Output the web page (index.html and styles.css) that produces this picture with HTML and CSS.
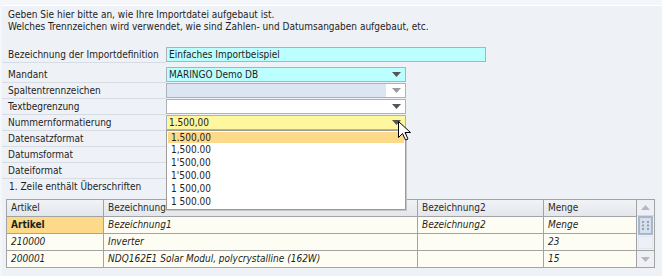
FILE: index.html
```html
<!DOCTYPE html>
<html lang="de">
<head>
<meta charset="utf-8">
<title>Importdefinition</title>
<link rel="stylesheet" href="styles.css">
</head>
<body>
<div class="panel">
  <div class="intro">
    <div>Geben Sie hier bitte an, wie Ihre Importdatei aufgebaut ist.</div>
    <div>Welches Trennzeichen wird verwendet, wie sind Zahlen- und Datumsangaben aufgebaut, etc.</div>
  </div>

  <div class="form">
    <div class="row">
      <div class="label">Bezeichnung der Importdefinition</div>
      <div class="field"><div class="input cyan wide"><span class="val">Einfaches Importbeispiel</span></div></div>
    </div>
    <div class="group">
      <div class="row">
        <div class="label">Mandant</div>
        <div class="field"><div class="input cyan combo"><span class="val">MARINGO Demo DB</span><span class="btn"><svg width="9" height="5" viewBox="0 0 9 5"><polygon points="0,0 9,0 4.5,5" fill="#555"/></svg></span></div></div>
      </div>
      <div class="row">
        <div class="label">Spaltentrennzeichen</div>
        <div class="field"><div class="input disabled combo"><span class="val"></span><span class="btn white"><svg width="9" height="5" viewBox="0 0 9 5"><polygon points="0,0 9,0 4.5,5" fill="#9a9a9a"/></svg></span></div></div>
      </div>
      <div class="row">
        <div class="label">Textbegrenzung</div>
        <div class="field"><div class="input plain combo"><span class="val"></span><span class="btn"><svg width="9" height="5" viewBox="0 0 9 5"><polygon points="0,0 9,0 4.5,5" fill="#555"/></svg></span></div></div>
      </div>
      <div class="row">
        <div class="label">Nummernformatierung</div>
        <div class="field"><div class="input yellow combo"><span class="val">1.500,00</span><span class="btn"><svg width="9" height="5" viewBox="0 0 9 5"><polygon points="0,0 9,0 4.5,5" fill="#555"/></svg></span></div></div>
      </div>
      <div class="row">
        <div class="label">Datensatzformat</div>
        <div class="field"></div>
      </div>
      <div class="row">
        <div class="label">Datumsformat</div>
        <div class="field"></div>
      </div>
      <div class="row">
        <div class="label">Dateiformat</div>
        <div class="field"></div>
      </div>
      <div class="row last">
        <div class="label">1. Zeile enthält Überschriften</div>
        <div class="field"></div>
      </div>
    </div>
  </div>

  <div class="table">
    <div class="cells">
      <div class="cell head">Artikel</div>
      <div class="cell head">Bezeichnung1</div>
      <div class="cell head">Bezeichnung2</div>
      <div class="cell head">Menge</div>

      <div class="cell sel">Artikel</div>
      <div class="cell it">Bezeichnung1</div>
      <div class="cell it">Bezeichnung2</div>
      <div class="cell it">Menge</div>

      <div class="cell it">210000</div>
      <div class="cell it">Inverter</div>
      <div class="cell it"></div>
      <div class="cell it">23</div>

      <div class="cell it">200001</div>
      <div class="cell it">NDQ162E1 Solar Modul, polycrystalline (162W)</div>
      <div class="cell it"></div>
      <div class="cell it">15</div>
    </div>
    <div class="scrollbar">
      <div class="sb-btn up"><svg width="9" height="5" viewBox="0 0 9 5"><polygon points="0,5 9,5 4.5,0" fill="#b4b8c0"/></svg></div>
      <div class="sb-thumb">
        <svg width="7" height="9" viewBox="0 0 7 9">
          <rect x="0" y="0" width="2" height="2" fill="#8fa4bc"/><rect x="5" y="0" width="2" height="2" fill="#8fa4bc"/>
          <rect x="0" y="3.5" width="2" height="2" fill="#8fa4bc"/><rect x="5" y="3.5" width="2" height="2" fill="#8fa4bc"/>
          <rect x="0" y="7" width="2" height="2" fill="#8fa4bc"/><rect x="5" y="7" width="2" height="2" fill="#8fa4bc"/>
        </svg>
      </div>
      <div class="sb-track"></div>
      <div class="sb-btn down"><svg width="9" height="5" viewBox="0 0 9 5"><polygon points="0,0 9,0 4.5,5" fill="#b4b8c0"/></svg></div>
    </div>
  </div>
</div>

<div class="dropdown">
  <div class="item hl">1.500,00</div>
  <div class="item">1,500.00</div>
  <div class="item">1'500,00</div>
  <div class="item">1'500.00</div>
  <div class="item">1 500,00</div>
  <div class="item">1 500.00</div>
</div>

<svg class="cursor" width="13" height="20" viewBox="0 0 13 20">
  <path d="M0.5,0.5 L0.5,16.5 L4.5,12.5 L7.5,19 L10,18 L7,11.5 L12.5,11.5 Z" fill="#fff" stroke="#000" stroke-width="1" stroke-linejoin="miter"/>
</svg>
</body>
</html>
```

FILE: styles.css
```css
* { box-sizing: border-box; }

html, body {
  margin: 0;
  padding: 0;
}

body {
  width: 662px;
  height: 276px;
  overflow: hidden;
  background: #f4f6f9;
  font-family: "DejaVu Sans Condensed", "DejaVu Sans", sans-serif;
  font-stretch: condensed;
  font-size: 10px;
  color: #1e1e1e;
  position: relative;
}

.panel {
  margin: 5px 0 0 2px;
  border-top: 1px solid #ffffff;
  background: #eef1f6;
  height: 271px;
}

.intro {
  padding: 3px 0 0 6px;
  line-height: 12px;
}

.form {
  margin-top: 14px;
}

.group {
  margin-top: 4px;
}

.row {
  display: flex;
  height: 16px;
}

.label {
  width: 164px;
  padding-left: 6px;
  line-height: 15px;
  border-bottom: 1px solid #d7dce4;
  white-space: nowrap;
}

.row.last .label {
  border-bottom: none;
  padding-left: 7px;
}

.field {
  flex: 1;
}

.input {
  display: flex;
  height: 15px;
  width: 240px;
  border: 1px solid #aab2ba;
  line-height: 13px;
}

.input.wide { width: 320px; }

.val {
  flex: 1;
  padding-left: 2px;
  white-space: nowrap;
}

.btn {
  width: 19px;
  display: flex;
  align-items: center;
  justify-content: center;
  padding-left: 1px;
}

.btn.white { background: #ffffff; }

.cyan { background: #bbffff; }
.disabled { background: #dce6f3; }
.plain { background: #ffffff; }
.yellow { background: #fff79e; }

.table {
  margin: 4px 0 0 4px;
  width: 649px;
  display: flex;
  border-top: 1px solid #a3a3a3;
  border-left: 1px solid #a3a3a3;
}

.cells {
  display: grid;
  grid-template-columns: 97px 314px 126px 93px;
  grid-auto-rows: 17px;
}

.cell {
  border-right: 1px solid #a3a3a3;
  border-bottom: 1px solid #a3a3a3;
  background: #fdfdf3;
  padding-left: 4px;
  line-height: 16px;
  white-space: nowrap;
  overflow: hidden;
}

.cell.head {
  background: linear-gradient(#f1f3f6, #e3e6eb);
  color: #2a2a2a;
}

.cell.sel {
  background: #fcda8a;
  font-weight: bold;
}

.cell.it {
  font-style: italic;
}

.scrollbar {
  width: 18px;
  height: 68px;
  border-right: 1px solid #a3a3a3;
  border-bottom: 1px solid #a3a3a3;
  background: #f0f1f6;
  display: flex;
  flex-direction: column;
}

.sb-btn {
  height: 16px;
  display: flex;
  align-items: center;
  justify-content: center;
  background: #eff0f5;
}

.sb-btn.up { border-bottom: 1px solid #d4d7de; height: 16px; }
.sb-btn.down { border-top: 1px solid #a3a3a3; height: 17px; }

.sb-thumb {
  height: 19px;
  margin: 0 1px;
  border: 2px solid #a6b8cc;
  background: #d6dfea;
  display: flex;
  align-items: center;
  justify-content: center;
}

.sb-track {
  flex: 1;
  margin: 1px 1px 1px 1px;
  background: #eef0f8;
  border: 1px solid #e2e5ee;
}

.dropdown {
  position: absolute;
  left: 166px;
  top: 130px;
  width: 240px;
  height: 80px;
  background: #ffffff;
  border: 1px solid #9c9c9c;
  box-shadow: 1px 1px 0 #c4c4c4;
  z-index: 5;
}

.item {
  height: 13px;
  line-height: 12px;
  padding-left: 4px;
  white-space: nowrap;
}

.item.hl {
  background: #fcda8a;
  margin: 1px 1px 0 1px;
  height: 11px;
  line-height: 11px;
  padding-left: 3px;
  margin-bottom: 1px;
}

.cursor {
  position: absolute;
  left: 398px;
  top: 121px;
  z-index: 10;
}
```
